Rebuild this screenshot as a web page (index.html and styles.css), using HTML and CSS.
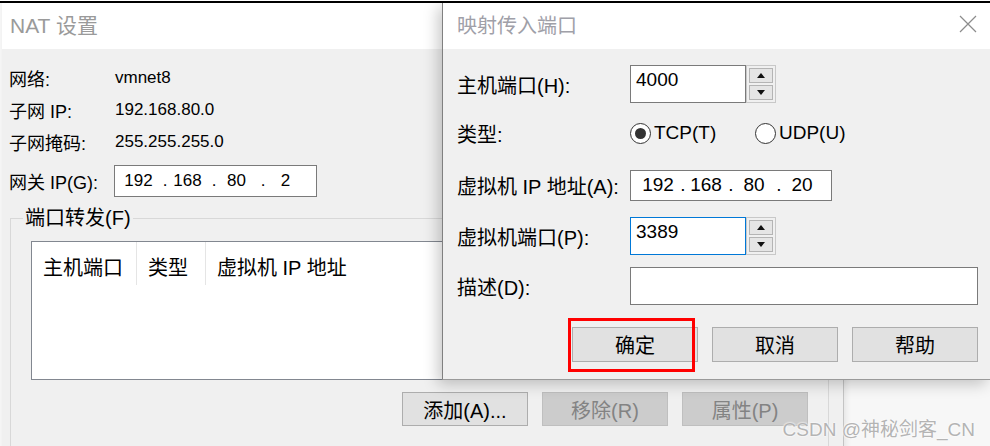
FILE: index.html
```html
<!DOCTYPE html>
<html>
<head>
    <title>NAT 设置</title>
    <link rel="stylesheet" href="styles.css">
</head>
<body>
    <div class="screen">
        <div class="nat-window">
            <div class="nat-title">NAT 设置</div>
            <div class="nat-body">
                <div class="info">
                    <span>网络:</span><span>vmnet8</span>
                    <span>子网 IP:</span><span>192.168.80.0</span>
                    <span>子网掩码:</span><span>255.255.255.0</span>
                </div>
                <div class="info gateway">
                    <span>网关 IP(G):</span>
                    <div class="ip-box small">
                        <span class="oct">192</span><span class="dot">.</span>
                        <span class="oct">168</span><span class="dot">.</span>
                        <span class="oct">80</span><span class="dot">.</span>
                        <span class="oct">2</span>
                    </div>
                </div>
                <fieldset class="group">
                    <legend>端口转发(F)</legend>
                    <div class="list">
                        <div class="list-head">
                            <div class="col c1">主机端口</div>
                            <div class="col c2">类型</div>
                            <div class="col c3">虚拟机 IP 地址</div>
                        </div>
                    </div>
                    <div class="btn-row">
                        <button class="btn">添加(A)...</button>
                        <button class="btn" disabled>移除(R)</button>
                        <button class="btn" disabled>属性(P)</button>
                    </div>
                </fieldset>
            </div>
        </div>

        <div class="dialog">
            <div class="dlg-title">
                <span>映射传入端口</span>
                <svg class="close" width="18" height="18" viewBox="0 0 18 18">
                    <path d="M1 1 L17 17 M17 1 L1 17" stroke="#8c8c8c" stroke-width="1.2" fill="none"/>
                </svg>
            </div>
            <div class="dlg-body">
                <div class="form">
                    <span>主机端口(H):</span>
                    <div class="spin">
                        <div class="spin-input">4000</div>
                        <div class="spin-btns">
                            <div class="arrow up"></div>
                            <div class="arrow down"></div>
                        </div>
                    </div>

                    <span>类型:</span>
                    <div class="radios">
                        <label class="radio first"><span class="circle checked"></span>TCP(T)</label>
                        <label class="radio"><span class="circle"></span>UDP(U)</label>
                    </div>

                    <span>虚拟机 IP 地址(A):</span>
                    <div class="ip-box wide">
                        <span class="oct">192</span><span class="dot">.</span>
                        <span class="oct">168</span><span class="dot">.</span>
                        <span class="oct">80</span><span class="dot">.</span>
                        <span class="oct">20</span>
                    </div>

                    <span>虚拟机端口(P):</span>
                    <div class="spin">
                        <div class="spin-input focused">3389</div>
                        <div class="spin-btns">
                            <div class="arrow up"></div>
                            <div class="arrow down"></div>
                        </div>
                    </div>

                    <span>描述(D):</span>
                    <div class="text-box"></div>
                </div>
                <div class="dlg-buttons">
                    <button class="btn">确定</button>
                    <button class="btn">取消</button>
                    <button class="btn">帮助</button>
                </div>
            </div>
            <div class="mark"></div>
        </div>

        <div class="watermark">CSDN @神秘剑客_CN</div>
    </div>
</body>
</html>
```

FILE: styles.css
```css
body {
    margin: 0;
    padding-top: 1px;
    background: #fff;
    font-family: "Liberation Sans", "Noto Sans CJK SC", sans-serif;
    color: #000;
}
.screen {
    position: relative;
    width: 990px;
    height: 443px;
    border-top: 2px solid #000;
    background: #f7f7f7;
    overflow: hidden;
}

/* NAT window (behind) */
.nat-window {
    position: absolute;
    left: 2px;
    top: 0;
    width: 841px;
    height: 470px;
    background: #f0f0f0;
    border-right: 1px solid #c4c4c4;
    box-shadow: 2px 0 6px rgba(0, 0, 0, 0.08);
}
.nat-title {
    height: 46px;
    background: #fff;
    padding-left: 8px;
    padding-bottom: 4px;
    box-sizing: border-box;
    display: flex;
    align-items: center;
    font-size: 21px;
    color: #9a9a9a;
}
.nat-body {
    padding: 13px 0 0 7px;
}
.info {
    display: grid;
    grid-template-columns: 106px auto;
    grid-auto-rows: 32px;
    align-items: center;
    font-size: 18px;
}
.info span:nth-child(even) {
    font-size: 17px;
}
.gateway {
    margin-top: 7px;
    grid-template-columns: 105px auto;
}
.ip-box {
    display: flex;
    align-items: center;
    background: #fff;
    border: 1px solid #7a7a7a;
    box-sizing: border-box;
    font-size: 17px;
}
.ip-box .oct {
    text-align: center;
}
.ip-box .dot {
    text-align: center;
}
.ip-box.small {
    width: 203px;
    height: 32px;
    padding-left: 6px;
}
.ip-box.small .oct {
    width: 35px;
}
.ip-box.small .dot {
    width: 14px;
    padding-left: 4px;
    box-sizing: border-box;
}
.ip-box.wide {
    width: 202px;
    height: 31px;
    padding-left: 9px;
    font-size: 19px;
}
.ip-box.wide .oct {
    width: 36px;
}
.ip-box.wide .dot {
    width: 12px;
    padding-left: 2px;
    box-sizing: border-box;
}

.group {
    margin: 9px 0 0 1px;
    width: 819px;
    box-sizing: border-box;
    padding: 0 20px;
    border: 1px solid #d8d8d8;
    height: 300px;
}
.group legend {
    font-size: 20px;
    line-height: 24px;
    padding: 0 2px;
    margin-left: -8px;
}
.list {
    margin-top: 11px;
    height: 139px;
    box-sizing: border-box;
    border: 1px solid #828790;
    background: #fff;
}
.list-head {
    display: flex;
    height: 43px;
    font-size: 20px;
}
.col {
    padding: 6px 0 0 11px;
    box-sizing: border-box;
    display: flex;
    align-items: center;
}
.c1 {
    width: 105px;
    border-right: 1px solid #e5e5e5;
}
.c2 {
    width: 69px;
    border-right: 1px solid #e5e5e5;
}
.btn-row {
    display: flex;
    justify-content: flex-end;
    gap: 14px;
    margin-top: 12px;
}
.btn {
    width: 126px;
    height: 34px;
    font-family: inherit;
    font-size: 20px;
    background: #e1e1e1;
    border: 1px solid #adadad;
    color: #000;
    padding: 0;
}
.btn:disabled {
    background: #cccccc;
    border-color: #bfbfbf;
    color: #838383;
}

/* mapping dialog (front) */
.dialog {
    position: absolute;
    left: 442px;
    top: 0;
    width: 548px;
    height: 377px;
    box-sizing: border-box;
    background: #f0f0f0;
    border-left: 1px solid #808080;
    border-bottom: 1px solid #9a9a9a;
    box-shadow: -4px 4px 14px rgba(0, 0, 0, 0.22);
}
.dlg-title {
    height: 46px;
    background: #fff;
    padding: 0 13px 4px 14px;
    box-sizing: border-box;
    display: flex;
    align-items: center;
    justify-content: space-between;
    font-size: 20px;
    color: #a0a0a8;
}
.dlg-body {
    padding: 13px 12px 0 14px;
}
.form {
    display: grid;
    grid-template-columns: 173px 1fr;
    grid-template-rows: 44px 54px 50px 52px 48px;
    align-items: center;
    font-size: 20px;
}
.spin {
    display: flex;
    height: 38px;
}
.spin-input {
    width: 116px;
    height: 38px;
    box-sizing: border-box;
    border: 1px solid #7a7a7a;
    background: #fff;
    padding: 3px 0 0 5px;
    font-size: 19px;
}
.spin-input.focused {
    border-color: #0078d7;
}
.spin-btns {
    width: 30px;
    box-sizing: border-box;
    border: 1px solid #c8c8c8;
    padding: 2px;
    display: flex;
    flex-direction: column;
    gap: 2px;
}
.arrow {
    flex: 1;
    background: #e5e5e5;
    border: 1px solid #b4b4b4;
    display: flex;
    align-items: center;
    justify-content: center;
}
.arrow::after {
    content: "";
    border-left: 4px solid transparent;
    border-right: 4px solid transparent;
}
.arrow.up::after {
    border-bottom: 5px solid #111;
}
.arrow.down::after {
    border-top: 5px solid #111;
}
.radios {
    display: flex;
    align-items: center;
    font-size: 19px;
}
.radio {
    display: flex;
    align-items: center;
    gap: 3px;
}
.radio.first {
    width: 125px;
}
.circle {
    width: 21px;
    height: 21px;
    box-sizing: border-box;
    border: 1px solid #333;
    border-radius: 50%;
    background: #fff;
    display: flex;
    align-items: center;
    justify-content: center;
}
.circle.checked::after {
    content: "";
    width: 11px;
    height: 11px;
    border-radius: 50%;
    background: #333;
}
.text-box {
    width: 348px;
    height: 38px;
    box-sizing: border-box;
    border: 1px solid #7a7a7a;
    background: #fff;
}
.dlg-buttons {
    display: flex;
    justify-content: flex-end;
    gap: 14px;
    margin-top: 17px;
}
.dlg-buttons .btn {
    height: 35px;
}
.mark {
    position: absolute;
    left: 125px;
    top: 315px;
    width: 127px;
    height: 54px;
    box-sizing: border-box;
    border: 3px solid #ff0000;
}

.watermark {
    position: absolute;
    right: 15px;
    top: 411px;
    font-size: 19px;
    color: #b4b4b4;
    text-shadow: 0 0 2px #fff, 0 0 2px #fff;
}
```
